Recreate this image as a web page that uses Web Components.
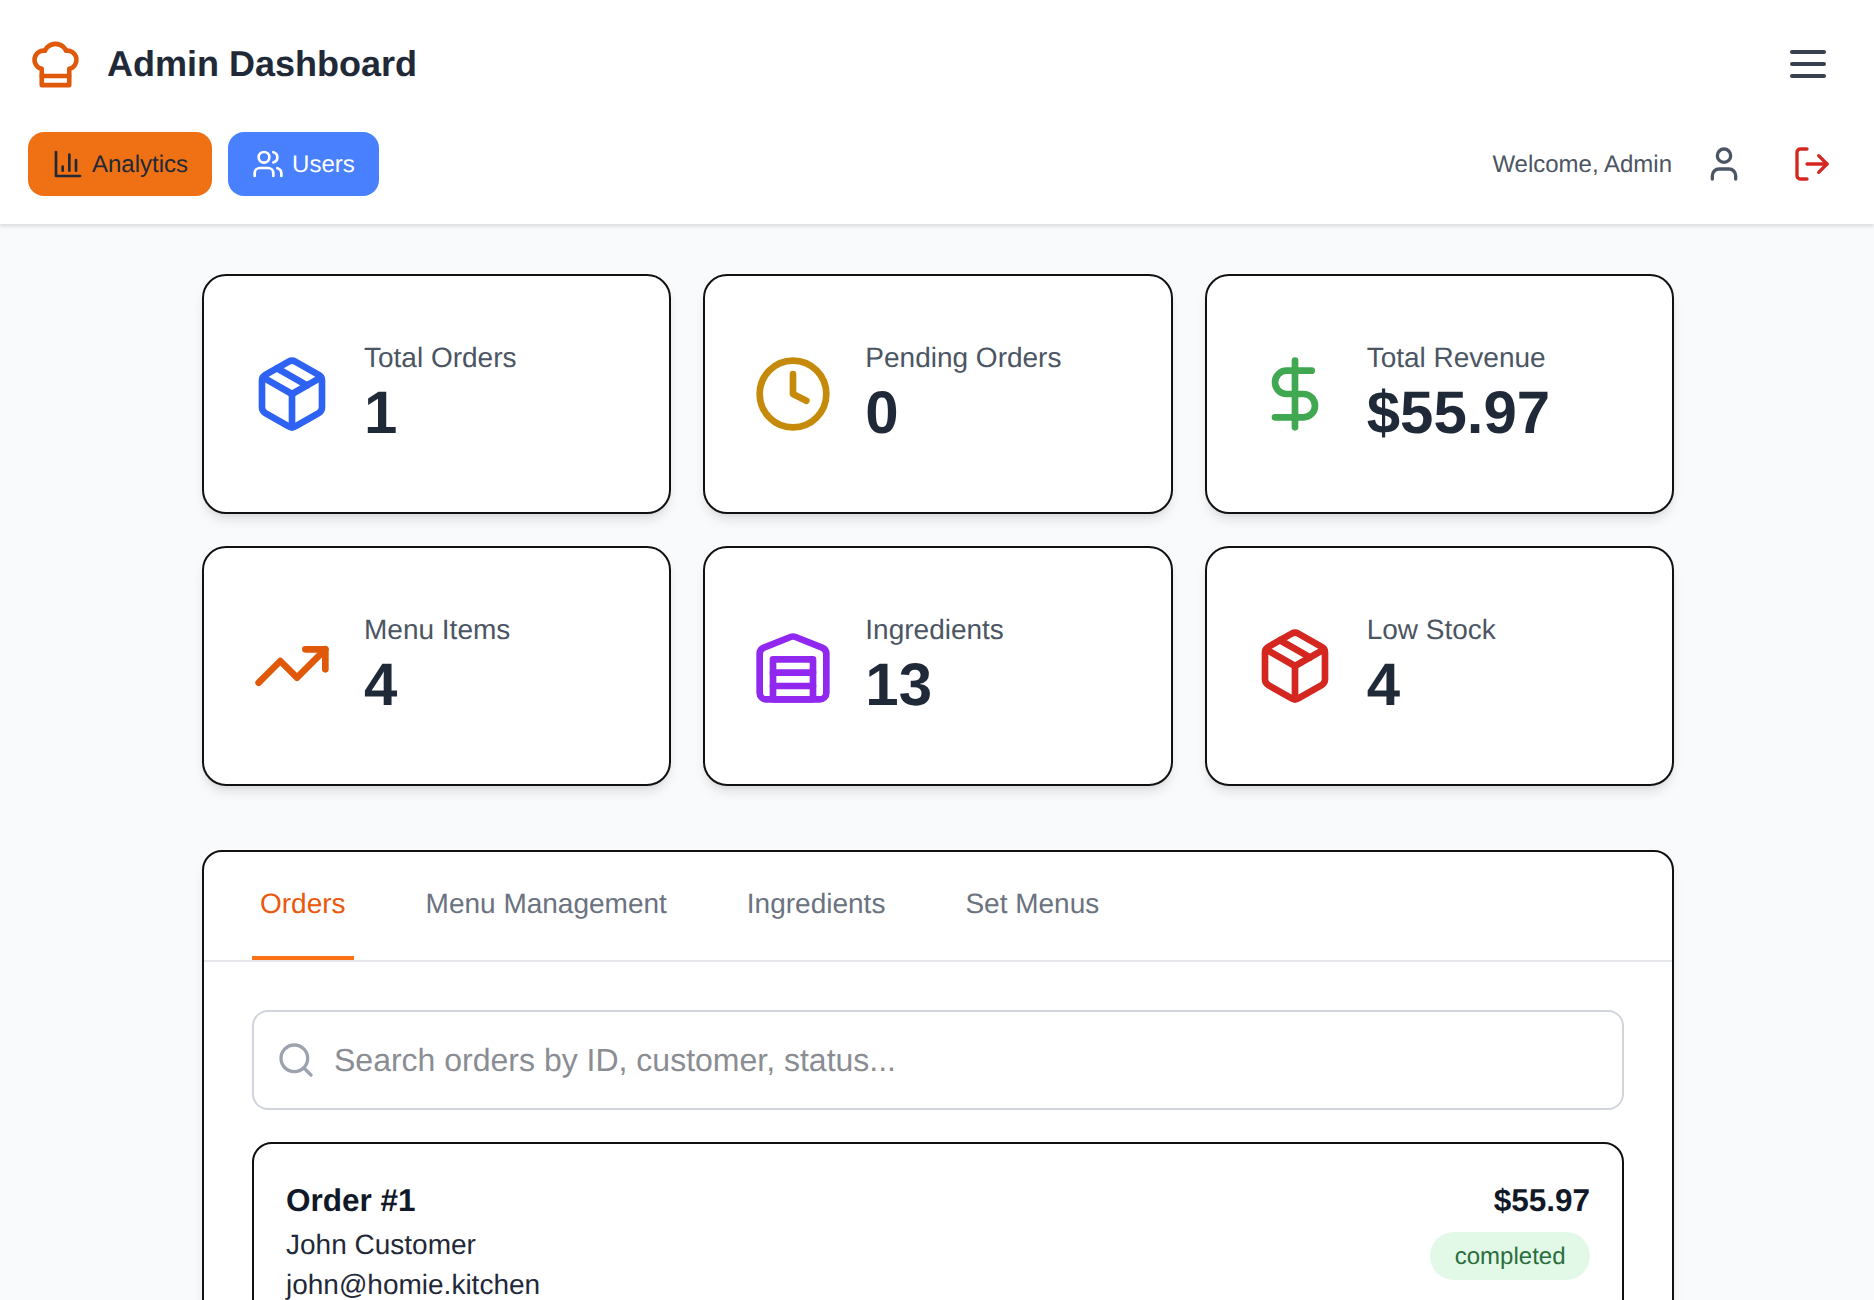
<!DOCTYPE html>
<html>
<head>
<meta charset="utf-8">
<title>Admin Dashboard</title>
<style>
    html, body { margin: 0; height: 1300px; overflow: hidden; }
    body { background: #f9fafb; font-family: "Liberation Sans", Arial, sans-serif; color: #1f2937; text-rendering: geometricPrecision; }
</style>
</head>
<body>
<admin-header></admin-header>
<admin-main>
    <stat-grid>
        <stat-card label="Total Orders" value="1" icon="package" color="#2e62f2"></stat-card>
        <stat-card label="Pending Orders" value="0" icon="clock" color="#c58a0a"></stat-card>
        <stat-card label="Total Revenue" value="$55.97" icon="dollar" color="#40a850"></stat-card>
        <stat-card label="Menu Items" value="4" icon="trending" color="#e0590a"></stat-card>
        <stat-card label="Ingredients" value="13" icon="warehouse" color="#9128f0"></stat-card>
        <stat-card label="Low Stock" value="4" icon="package" color="#d42720"></stat-card>
    </stat-grid>
    <tab-panel>
        <search-box placeholder="Search orders by ID, customer, status..."></search-box>
        <order-card order="Order #1" total="$55.97" status="completed">
            <div>John Customer</div>
            <div>john@homie.kitchen</div>
        </order-card>
    </tab-panel>
</admin-main>

<script>
const ICONS = {
    hat: `<path d="M6 13.87A4 4 0 0 1 7.41 6a5.11 5.11 0 0 1 1.05-1.54 5 5 0 0 1 7.08 0A5.11 5.11 0 0 1 16.59 6 4 4 0 0 1 18 13.87V21H6Z"/><line x1="6" y1="17" x2="18" y2="17"/>`,
    menu: `<line x1="4" y1="6" x2="20" y2="6"/><line x1="4" y1="12" x2="20" y2="12"/><line x1="4" y1="18" x2="20" y2="18"/>`,
    chart: `<path d="M3 3v18h18"/><path d="M18 17V9"/><path d="M13 17V5"/><path d="M8 17v-3"/>`,
    users: `<path d="M16 21v-2a4 4 0 0 0-4-4H6a4 4 0 0 0-4 4v2"/><circle cx="9" cy="7" r="4"/><path d="M22 21v-2a4 4 0 0 0-3-3.87"/><path d="M16 3.13a4 4 0 0 1 0 7.75"/>`,
    user: `<path d="M19 21v-2a4 4 0 0 0-4-4H9a4 4 0 0 0-4 4v2"/><circle cx="12" cy="7" r="4"/>`,
    logout: `<path d="M9 21H5a2 2 0 0 1-2-2V5a2 2 0 0 1 2-2h4"/><polyline points="16 17 21 12 16 7"/><line x1="21" y1="12" x2="9" y2="12"/>`,
    package: `<path d="M21 8a2 2 0 0 0-1-1.73l-7-4a2 2 0 0 0-2 0l-7 4A2 2 0 0 0 3 8v8a2 2 0 0 0 1 1.73l7 4a2 2 0 0 0 2 0l7-4A2 2 0 0 0 21 16Z"/><path d="m3.3 7 8.7 5 8.7-5"/><path d="M12 22V12"/><path d="m7.5 4.27 9 5.15"/>`,
    clock: `<circle cx="12" cy="12" r="10"/><polyline points="12 6 12 12 16 14"/>`,
    dollar: `<line x1="12" y1="2" x2="12" y2="22"/><path d="M17 5H9.5a3.5 3.5 0 0 0 0 7h5a3.5 3.5 0 0 1 0 7H6"/>`,
    trending: `<polyline points="22 7 13.5 15.5 8.5 10.5 2 17"/><polyline points="16 7 22 7 22 13"/>`,
    warehouse: `<path d="M22 8.35V20a2 2 0 0 1-2 2H4a2 2 0 0 1-2-2V8.35A2 2 0 0 1 3.26 6.5l8-3.2a2 2 0 0 1 1.48 0l8 3.2A2 2 0 0 1 22 8.35Z"/><path d="M6 18h12"/><path d="M6 14h12"/><rect x="6" y="10" width="12" height="12"/>`,
    search: `<circle cx="11" cy="11" r="8"/><path d="m21 21-4.3-4.3"/>`
}

class AppIcon extends HTMLElement {
    constructor() {
        super();
        const size = this.getAttribute("size") || 24
        const color = this.getAttribute("color") || "currentColor"
        this.attachShadow({ mode: "open" }).innerHTML = `
            <style>
                :host { display: block; flex: none; width: ${size}px; height: ${size}px; color: ${color}; }
                svg { display: block; width: 100%; height: 100%; }
            </style>
            <svg viewBox="0 0 24 24" fill="none" stroke="currentColor" stroke-width="2" stroke-linecap="round" stroke-linejoin="round">${ICONS[this.getAttribute("name")]}</svg>`
    }
}
customElements.define("app-icon", AppIcon);

const headerTemplate = document.createElement("template")
headerTemplate.innerHTML = `
    <style>
        :host { display: block; background: #fff; box-shadow: 0 3px 3px rgba(0,0,0,.1); padding: 32px 42px 28px 28px; position: relative; }
        .row { display: flex; align-items: center; justify-content: space-between; }
        .top { height: 64px; margin-bottom: 36px; }
        .brand { display: flex; align-items: center; gap: 24px; }
        h1 { margin: 0; font-size: 36px; font-weight: 700; color: #1f2937; }
        .nav { display: flex; gap: 16px; }
        button {
            display: flex; align-items: center; gap: 8px; height: 64px; padding: 0 24px; border: 0; border-radius: 16px;
            font: 24px "Liberation Sans", Arial, sans-serif; text-rendering: geometricPrecision;
        }
        button span, .welcome { margin-top: 2px; }
        .orange { background: #ef7114; color: #1f2937; }
        .blue { background: #4880fd; color: #fff; }
        .account { display: flex; align-items: center; color: #4b5563; font-size: 24px; }
        .welcome { margin-right: 32px; }
        .logout { margin-left: 48px; }
    </style>
    <div class="row top">
        <div class="brand">
            <app-icon name="hat" size="55" color="#e0590a"></app-icon>
            <h1>Admin Dashboard</h1>
        </div>
        <app-icon name="menu" size="48" color="#374151"></app-icon>
    </div>
    <div class="row">
        <div class="nav">
            <button class="orange"><app-icon name="chart" size="32"></app-icon><span>Analytics</span></button>
            <button class="blue"><app-icon name="users" size="32"></app-icon><span>Users</span></button>
        </div>
        <div class="account">
            <span class="welcome">Welcome, Admin</span>
            <app-icon name="user" size="40"></app-icon>
            <app-icon class="logout" name="logout" size="40" color="#d42720"></app-icon>
        </div>
    </div>
`
class AdminHeader extends HTMLElement {
    constructor() {
        super();
        this.attachShadow({ mode: "open" }).append(headerTemplate.content.cloneNode(true))
    }
}
customElements.define("admin-header", AdminHeader);

class AdminMain extends HTMLElement {
    constructor() {
        super();
        this.attachShadow({ mode: "open" }).innerHTML = `
            <style>
                :host { display: block; width: 1472px; margin: 0 auto; padding: 50px 0 0 2px; }
            </style>
            <slot></slot>`
    }
}
customElements.define("admin-main", AdminMain);

class StatGrid extends HTMLElement {
    constructor() {
        super();
        this.attachShadow({ mode: "open" }).innerHTML = `
            <style>
                :host { display: grid; grid-template-columns: repeat(3, 1fr); gap: 32.5px 32px; margin-bottom: 64.5px; }
            </style>
            <slot></slot>`
    }
}
customElements.define("stat-grid", StatGrid);

class StatCard extends HTMLElement {
    constructor() {
        super();
        this.attachShadow({ mode: "open" }).innerHTML = `
            <style>
                :host {
                    display: flex; align-items: center; gap: 32px; box-sizing: border-box; height: 239.5px; padding: 0 48px;
                    background: #fff; border: 2px solid #111; border-radius: 24px;
                    box-shadow: 0 8px 12px -2px rgba(0,0,0,.1), 0 3px 5px -2px rgba(0,0,0,.06);
                }
                .label { font-size: 28px; line-height: 38px; color: #4b5563; }
                .value { font-size: 60px; line-height: 72px; font-weight: 700; color: #1f2937; }
            </style>
            <app-icon name="${this.getAttribute("icon")}" size="80" color="${this.getAttribute("color")}"></app-icon>
            <div>
                <div class="label">${this.getAttribute("label")}</div>
                <div class="value">${this.getAttribute("value")}</div>
            </div>`
    }
}
customElements.define("stat-card", StatCard);

class TabPanel extends HTMLElement {
    constructor() {
        super();
        this.attachShadow({ mode: "open" }).innerHTML = `
            <style>
                :host { display: block; background: #fff; border: 2px solid #111; border-radius: 20px; box-shadow: 0 8px 12px -2px rgba(0,0,0,.1); }
                nav { display: flex; gap: 64px; padding: 0 48px; height: 108px; border-bottom: 2px solid #e5e7eb; }
                a { box-sizing: border-box; height: 108px; padding: 32px 8px 0; font-size: 28px; line-height: 40px; color: #6b7280; }
                a.active { color: #ea580c; border-bottom: 4px solid #f97316; }
                .body { padding: 48px; }
            </style>
            <nav>
                <a class="active">Orders</a>
                <a>Menu Management</a>
                <a>Ingredients</a>
                <a>Set Menus</a>
            </nav>
            <div class="body"><slot></slot></div>`
    }
}
customElements.define("tab-panel", TabPanel);

class SearchBox extends HTMLElement {
    constructor() {
        super();
        this.attachShadow({ mode: "open" }).innerHTML = `
            <style>
                :host {
                    display: flex; align-items: center; gap: 18px; box-sizing: border-box; height: 100px; padding: 0 22px; margin-bottom: 32px;
                    border: 2px solid #d1d5db; border-radius: 16px; background: #fff;
                }
                span { font-size: 32px; color: #8a8d93; }
            </style>
            <app-icon name="search" size="40" color="#9ca3af"></app-icon>
            <span>${this.getAttribute("placeholder")}</span>`
    }
}
customElements.define("search-box", SearchBox);

class OrderCard extends HTMLElement {
    constructor() {
        super();
        this.attachShadow({ mode: "open" }).innerHTML = `
            <style>
                :host {
                    display: flex; justify-content: space-between; align-items: flex-start; padding: 32px; height: 300px; box-sizing: border-box;
                    border: 2px solid #111; border-radius: 20px; background: #fff;
                }
                .title { font-size: 31.5px; line-height: 48px; font-weight: 700; color: #111827; }
                .info { font-size: 28px; line-height: 40px; color: #1f2937; margin-top: 1px; }
                .side { display: flex; flex-direction: column; align-items: flex-end; gap: 8px; }
                .status { padding: 9px 24.5px 7px; border-radius: 24px; background: #e2f9e8; color: #2a6e3c; font-size: 24px; line-height: 32px; }
            </style>
            <div>
                <div class="title">${this.getAttribute("order")}</div>
                <div class="info"><slot></slot></div>
            </div>
            <div class="side">
                <div class="title">${this.getAttribute("total")}</div>
                <div class="status">${this.getAttribute("status")}</div>
            </div>`
    }
}
customElements.define("order-card", OrderCard);
</script>
</body>
</html>
